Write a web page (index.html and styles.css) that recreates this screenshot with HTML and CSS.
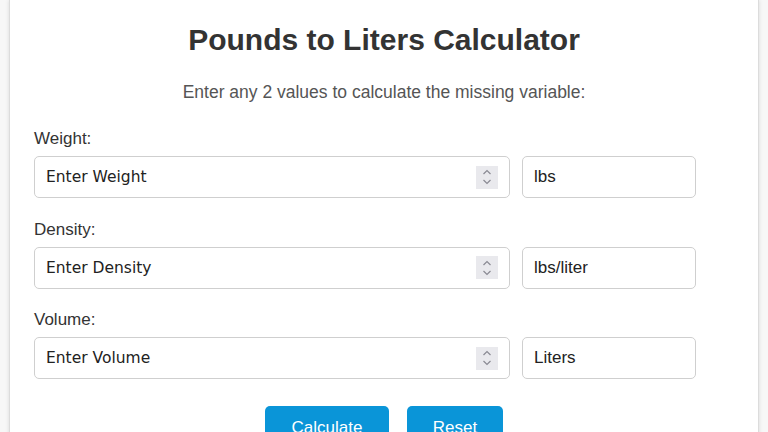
FILE: index.html
```html
<!DOCTYPE html>
<html lang="en">
<head>
<meta charset="utf-8">
<title>Pounds to Liters Calculator</title>
<link rel="stylesheet" href="styles.css">
</head>
<body>
<div class="card">
  <h1 class="title">Pounds to Liters Calculator</h1>
  <p class="intro">Enter any 2 values to calculate the missing variable:</p>

  <div class="group">
    <label class="label" for="weight">Weight:</label>
    <div class="row">
      <div class="field">
        <input class="num" id="weight" type="text" placeholder="Enter Weight">
        <span class="spin"><svg width="10" height="18" viewBox="0 0 10 18"><path d="M1.5 6 L5 2.5 L8.5 6" fill="none" stroke="#8a8a93" stroke-width="1.2"/><path d="M1.5 12 L5 15.5 L8.5 12" fill="none" stroke="#8a8a93" stroke-width="1.2"/></svg></span>
      </div>
      <div class="unit">lbs</div>
    </div>
  </div>

  <div class="group">
    <label class="label" for="density">Density:</label>
    <div class="row">
      <div class="field">
        <input class="num" id="density" type="text" placeholder="Enter Density">
        <span class="spin"><svg width="10" height="18" viewBox="0 0 10 18"><path d="M1.5 6 L5 2.5 L8.5 6" fill="none" stroke="#8a8a93" stroke-width="1.2"/><path d="M1.5 12 L5 15.5 L8.5 12" fill="none" stroke="#8a8a93" stroke-width="1.2"/></svg></span>
      </div>
      <div class="unit">lbs/liter</div>
    </div>
  </div>

  <div class="group">
    <label class="label" for="volume">Volume:</label>
    <div class="row">
      <div class="field">
        <input class="num" id="volume" type="text" placeholder="Enter Volume">
        <span class="spin"><svg width="10" height="18" viewBox="0 0 10 18"><path d="M1.5 6 L5 2.5 L8.5 6" fill="none" stroke="#8a8a93" stroke-width="1.2"/><path d="M1.5 12 L5 15.5 L8.5 12" fill="none" stroke="#8a8a93" stroke-width="1.2"/></svg></span>
      </div>
      <div class="unit">Liters</div>
    </div>
  </div>

  <div class="buttons">
    <button class="btn calc" type="button">Calculate</button>
    <button class="btn reset" type="button">Reset</button>
  </div>
</div>
</body>
</html>
```
FILE: styles.css
```css
* { box-sizing: border-box; }
html, body { margin: 0; padding: 0; }
body {
  background: #f7f7f7;
  font-family: "Liberation Sans", Arial, sans-serif;
  color: #333;
}
.card {
  width: 750px;
  margin: 0 auto;
  background: #fff;
  border: 1px solid #dcdcdc;
  border-top: none;
  box-shadow: 0 0 4px rgba(0,0,0,0.12);
  padding: 23px 24px 40px 24px;
}
.title {
  margin: 0;
  text-align: center;
  font-size: 30px;
  line-height: 34px;
  font-weight: bold;
  color: #333;
}
.intro {
  margin: 25px 0 0 0;
  text-align: center;
  font-size: 17.5px;
  line-height: 20px;
  color: #555;
}
.group { margin-top: 27px; }
.group + .group { margin-top: 21.5px; }
.label {
  display: block;
  font-size: 17px;
  line-height: 20px;
  color: #333;
  margin-bottom: 7px;
}
.row {
  display: flex;
  align-items: center;
  gap: 12px;
}
.field {
  width: 476px;
  height: 42px;
  border: 1px solid #cfcfcf;
  border-radius: 5px;
  display: flex;
  align-items: center;
  padding: 0 11px 0 11px;
  background: #fff;
}
.num {
  flex: 1;
  min-width: 0;
  border: none;
  outline: none;
  background: transparent;
  font-family: "DejaVu Sans", Verdana, sans-serif;
  font-size: 15.5px;
  color: #222;
  padding: 0;
}
.num::placeholder { color: #222; opacity: 1; }
.spin {
  width: 22px;
  height: 23px;
  background: #e9e9ed;
  display: flex;
  align-items: center;
  justify-content: center;
}
.unit {
  width: 174px;
  height: 42px;
  border: 1px solid #cfcfcf;
  border-radius: 5px;
  display: flex;
  align-items: center;
  padding: 0 11px;
  font-size: 17px;
  color: #222;
}
.buttons {
  display: flex;
  justify-content: center;
  gap: 18px;
  margin-top: 27px;
}
.btn {
  border: none;
  border-radius: 5px;
  background: #0a95d8;
  color: #fff;
  font-family: "Liberation Sans", Arial, sans-serif;
  font-size: 17px;
  height: 44px;
  padding: 0 25px;
  cursor: pointer;
}
.calc { width: 124px; }
.reset { width: 96px; }
```
